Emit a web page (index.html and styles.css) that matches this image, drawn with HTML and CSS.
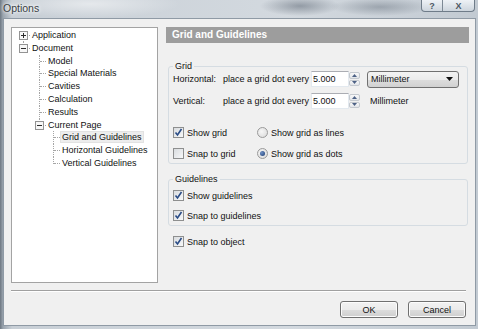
FILE: index.html
```html
<!DOCTYPE html>
<html lang="en">
<head>
  <meta charset="UTF-8">
  <meta name="viewport" content="width=device-width, initial-scale=1">
  <title>Options</title>
  <link rel="stylesheet" href="styles.css">
</head>
<body>

  <div class="window">
    <div class="titlebar">
      <span class="title">Options</span>
      <div class="caption-btns">
        <span class="cap cap-help">?</span>
        <span class="cap cap-close">X</span>
      </div>
    </div>

    <div class="client">
      <div class="main">
        <div class="tree">
          <ul class="root">
            <li class="first">
              <div class="node">
                <span class="exp"><svg width="9" height="9" viewBox="0 0 9 9"><rect x="0.5" y="0.5" width="8" height="8" fill="#f7f7f7" stroke="#939393"/><path d="M2 4.5h5M4.5 2v5" stroke="#2b2b2b"/></svg></span>Application
              </div>
            </li>
            <li class="last">
              <div class="node">
                <span class="exp"><svg width="9" height="9" viewBox="0 0 9 9"><rect x="0.5" y="0.5" width="8" height="8" fill="#f7f7f7" stroke="#939393"/><path d="M2 4.5h5" stroke="#2b2b2b"/></svg></span>Document
              </div>
              <ul class="lvl1">
                <li><div class="node">Model</div></li>
                <li><div class="node">Special Materials</div></li>
                <li><div class="node">Cavities</div></li>
                <li><div class="node">Calculation</div></li>
                <li><div class="node">Results</div></li>
                <li class="last">
                  <div class="node">
                    <span class="exp"><svg width="9" height="9" viewBox="0 0 9 9"><rect x="0.5" y="0.5" width="8" height="8" fill="#f7f7f7" stroke="#939393"/><path d="M2 4.5h5" stroke="#2b2b2b"/></svg></span>Current Page
                  </div>
                  <ul class="lvl2">
                    <li><div class="node"><span class="sel">Grid and Guidelines</span></div></li>
                    <li><div class="node">Horizontal Guidelines</div></li>
                    <li class="last"><div class="node">Vertical Guidelines</div></li>
                  </ul>
                </li>
              </ul>
            </li>
          </ul>
        </div>

        <div class="panel">
          <div class="panel-head">Grid and Guidelines</div>

          <fieldset class="group">
            <legend>Grid</legend>
            <div class="grid-rows">
              <span>Horizontal:</span>
              <span>place a grid dot every</span>
              <div class="spin">
                <span class="spin-input">5.000</span>
                <span class="spin-btns">
                  <span class="spin-up"><svg width="5" height="3" viewBox="0 0 5 3"><path d="M0 3L2.5 0L5 3z" fill="#4d6185"/></svg></span>
                  <span class="spin-down"><svg width="5" height="3" viewBox="0 0 5 3"><path d="M0 0L2.5 3L5 0z" fill="#4d6185"/></svg></span>
                </span>
              </div>
              <div class="combo">
                <span>Millimeter</span>
                <svg width="7" height="4" viewBox="0 0 7 4"><path d="M0 0h7L3.5 4z" fill="#111"/></svg>
              </div>

              <span>Vertical:</span>
              <span>place a grid dot every</span>
              <div class="spin">
                <span class="spin-input">5.000</span>
                <span class="spin-btns">
                  <span class="spin-up"><svg width="5" height="3" viewBox="0 0 5 3"><path d="M0 3L2.5 0L5 3z" fill="#4d6185"/></svg></span>
                  <span class="spin-down"><svg width="5" height="3" viewBox="0 0 5 3"><path d="M0 0L2.5 3L5 0z" fill="#4d6185"/></svg></span>
                </span>
              </div>
              <span class="unit">Millimeter</span>
            </div>

            <div class="opts">
              <label class="opt"><span class="cb"><svg width="9" height="9" viewBox="0 0 9 9"><path d="M1.5 4.5L3.5 7L7.5 1" fill="none" stroke="#2a4c86" stroke-width="1.6"/></svg></span>Show grid</label>
              <label class="opt"><span class="rb"></span>Show grid as lines</label>
              <label class="opt"><span class="cb"></span>Snap to grid</label>
              <label class="opt"><span class="rb on"></span>Show grid as dots</label>
            </div>
          </fieldset>

          <fieldset class="group group-guides">
            <legend>Guidelines</legend>
            <div class="opts-col">
              <label class="opt"><span class="cb"><svg width="9" height="9" viewBox="0 0 9 9"><path d="M1.5 4.5L3.5 7L7.5 1" fill="none" stroke="#2a4c86" stroke-width="1.6"/></svg></span>Show guidelines</label>
              <label class="opt"><span class="cb"><svg width="9" height="9" viewBox="0 0 9 9"><path d="M1.5 4.5L3.5 7L7.5 1" fill="none" stroke="#2a4c86" stroke-width="1.6"/></svg></span>Snap to guidelines</label>
            </div>
          </fieldset>

          <label class="opt snap-object"><span class="cb"><svg width="9" height="9" viewBox="0 0 9 9"><path d="M1.5 4.5L3.5 7L7.5 1" fill="none" stroke="#2a4c86" stroke-width="1.6"/></svg></span>Snap to object</label>
        </div>
      </div>

      <div class="sep"></div>

      <div class="footer">
        <button class="btn">OK</button>
        <button class="btn">Cancel</button>
      </div>
    </div>
  </div>

</body>
</html>
```

FILE: styles.css
```css
* {
  box-sizing: border-box;
}
body {
  margin: 0;
  width: 478px;
  height: 329px;
  overflow: hidden;
  font-family: 'Liberation Sans', Arial, sans-serif;
  font-size: 9px;
  color: #111;
  background:
    radial-gradient(ellipse 40px 10px at 300px 6px, rgba(95, 105, 118, 0.55), transparent),
    radial-gradient(ellipse 50px 9px at 380px 7px, rgba(110, 120, 132, 0.5), transparent),
    radial-gradient(ellipse 90px 14px at 90px 4px, rgba(255, 255, 255, 0.5), transparent),
    linear-gradient(90deg, #6d7782 0, #9aa4ae 3px, #c8cfd6 12px, #d3d9df 60%, #c2cad2 100%);
}
.window {
  height: 100%;
  display: flex;
  flex-direction: column;
}
.titlebar {
  height: 18px;
  display: flex;
  align-items: flex-start;
  padding: 0 3px 0 3px;
}
.title {
  margin-top: 2px;
  font-size: 10.5px;
  color: #3a3f45;
  text-shadow: 0 0 5px #fff, 0 0 3px #fff;
}
.caption-btns {
  margin-left: auto;
  display: flex;
  height: 12px;
  border: 1px solid #6f7c89;
  border-top: none;
  border-radius: 0 0 4px 4px;
  overflow: hidden;
  background: linear-gradient(#eef2f6, #cdd5dd);
}
.cap {
  display: flex;
  align-items: center;
  justify-content: center;
  font-size: 9px;
  color: #4d5864;
  font-weight: bold;
}
.cap-help {
  width: 21px;
  border-right: 1px solid #7d8995;
}
.cap-close {
  width: 31px;
}

.client {
  flex: 1;
  margin: 0 2px 3px 3px;
  border: 1px solid #8f9aa5;
  background: #f0f0f0;
  padding: 8px 6px 0 7px;
}
.main {
  display: flex;
  gap: 8px;
  height: 256px;
}

/* tree */
.tree {
  width: 147px;
  background: #fff;
  border: 1px solid #a3a3a3;
  padding-top: 1px;
}
.tree ul {
  list-style: none;
  margin: 0;
  padding: 0;
}
.tree .lvl1 {
  padding-left: 16px;
}
.tree .lvl2 {
  padding-left: 14px;
}
.tree li {
  position: relative;
}
.tree li::before {
  content: '';
  position: absolute;
  left: 11px;
  top: 0;
  bottom: 0;
  border-left: 1px dotted #a5a5a5;
}
.tree li.first::before {
  top: 6px;
}
.tree li.last::before {
  bottom: auto;
  height: 7px;
}
.node {
  position: relative;
  height: 12.8px;
  line-height: 12.8px;
  padding-left: 20px;
  white-space: nowrap;
}
.node::before {
  content: '';
  position: absolute;
  left: 12px;
  top: 6px;
  width: 6px;
  border-top: 1px dotted #a5a5a5;
}
.exp {
  position: absolute;
  left: 7px;
  top: 2px;
  width: 9px;
  height: 9px;
  z-index: 1;
  display: flex;
}
.sel {
  background: #ededed;
  border: 1px solid #e2e2e2;
  padding: 0 1px;
  margin-left: -2px;
}

/* right panel */
.panel {
  width: 303px;
  display: flex;
  flex-direction: column;
}
.panel-head {
  height: 16px;
  line-height: 16px;
  background: #9d9d9d;
  color: #fff;
  font-weight: bold;
  font-size: 10px;
  padding-left: 6px;
}
.group {
  margin: 18px 1px 0 2px;
  padding: 0 4px 3px 4px;
  border: 1px solid #d5dce2;
  border-radius: 3px;
  min-width: 0;
}
.group legend {
  padding: 0 2px;
  line-height: 10px;
  height: 10px;
}
.grid-rows {
  display: grid;
  grid-template-columns: 50px 88px 56px 1fr;
  grid-auto-rows: 16px;
  row-gap: 6px;
  align-items: center;
}
.spin {
  display: flex;
  height: 16px;
}
.spin-input {
  width: 38px;
  background: #fff;
  border: 1px solid #e3e9ef;
  border-top-color: #abadb3;
  padding-left: 1px;
  line-height: 14px;
}
.spin-btns {
  width: 11px;
  display: flex;
  flex-direction: column;
  gap: 1px;
  padding: 1px 0;
}
.spin-up,
.spin-down {
  flex: 1;
  display: flex;
  align-items: center;
  justify-content: center;
  border: 1px solid #c4c9cf;
  border-radius: 2px;
  background: linear-gradient(#f8f8f8, #e2e5e9);
}
.combo {
  width: 92px;
  height: 17px;
  border: 1px solid #707070;
  border-radius: 3px;
  background: linear-gradient(#f3f3f3 0, #ebebeb 50%, #dddddd 51%, #d1d1d1 100%);
  display: flex;
  align-items: center;
  justify-content: space-between;
  padding: 0 5px 0 3px;
}
.unit {
  padding-left: 3px;
}
.opts {
  display: grid;
  grid-template-columns: 84px 1fr;
  grid-auto-rows: 13px;
  row-gap: 8px;
  margin-top: 17px;
}
.opt {
  display: flex;
  align-items: center;
  height: 13px;
}
.cb {
  width: 11px;
  height: 11px;
  margin-right: 3px;
  border: 1px solid #8e8f8f;
  background: linear-gradient(135deg, #d9dcdf, #f7f8f9);
  display: flex;
  align-items: center;
  justify-content: center;
}
.rb {
  width: 11px;
  height: 11px;
  margin-right: 3px;
  border: 1px solid #9a9a9a;
  border-radius: 50%;
  background: radial-gradient(circle at 40% 40%, #f6f6f6, #d8d8d8);
  display: flex;
  align-items: center;
  justify-content: center;
}
.rb.on::after {
  content: '';
  width: 5px;
  height: 5px;
  border-radius: 50%;
  background: radial-gradient(circle at 35% 35%, #6d8fc4, #1c3c72);
}
.group-guides {
  margin-top: 10px;
}
.opts-col {
  display: flex;
  flex-direction: column;
  gap: 7px;
  margin-top: 5px;
  padding-bottom: 0;
}
.snap-object {
  margin: 9px 0 0 7px;
}

/* bottom */
.sep {
  margin: 7px 3px 0 0;
  border-top: 1px solid #a0a0a0;
  border-bottom: 1px solid #fff;
}
.footer {
  display: flex;
  justify-content: flex-end;
  gap: 10px;
  margin: 9px 3px 0 0;
}
.btn {
  width: 58px;
  height: 17px;
  padding: 0;
  font-family: inherit;
  font-size: 9px;
  color: #111;
  border: 1px solid #707070;
  border-radius: 3px;
  background: linear-gradient(#f2f2f2 0, #ebebeb 50%, #dddddd 51%, #cfcfcf 100%);
  box-shadow: inset 0 0 0 1px #fcfcfc;
}
```
